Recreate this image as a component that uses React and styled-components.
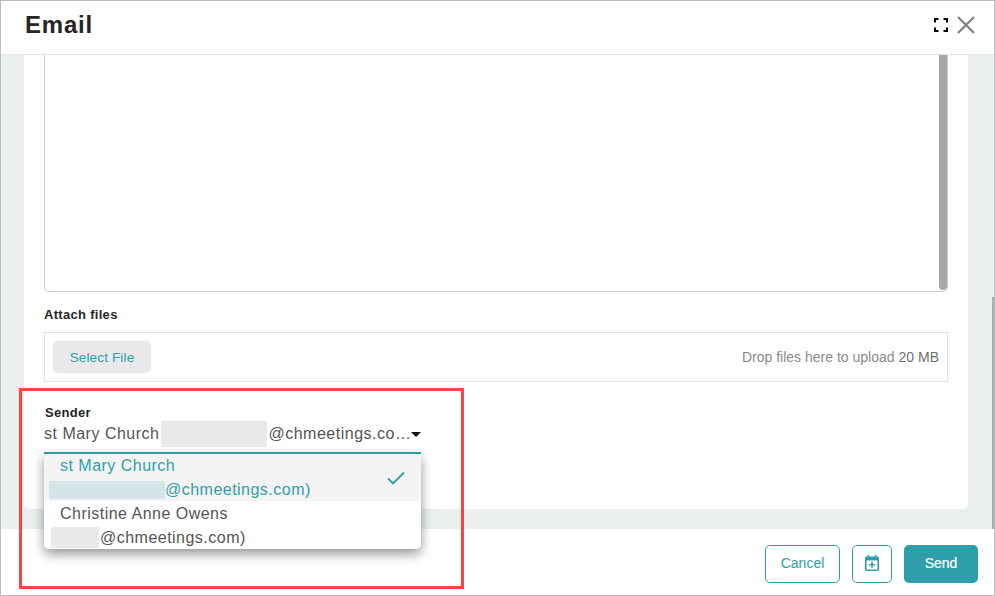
import React from 'react'
import styled, { createGlobalStyle } from 'styled-components'

const GlobalStyle = createGlobalStyle`
  html, body { margin: 0; padding: 0; background: #fff; }
  * { box-sizing: border-box; }
  body { font-family: "Liberation Sans", Arial, sans-serif; }
`

const Window = styled.div`
  position: relative;
  width: 995px;
  height: 596px;
  display: flex;
  flex-direction: column;
  border: 1px solid #bdbdbd;
  background: #fff;
  overflow: hidden;
`

const Header = styled.header`
  height: 54px;
  flex: none;
  display: flex;
  align-items: center;
  justify-content: space-between;
  padding: 0 19px 6px 24px;
  border-bottom: 1px solid #e6e6e6;
`

const Title = styled.h1`
  margin: 0;
  font-size: 24px;
  font-weight: 700;
  letter-spacing: 0.8px;
  color: #262626;
`

const HeaderIcons = styled.div`
  display: flex;
  align-items: center;
  gap: 9px;
`

const Body = styled.main`
  flex: none;
  height: 474px;
  background: #ebefef;
  padding: 0 26px 20px 23px;
  position: relative;
`

const Card = styled.section`
  height: 100%;
  background: #fff;
  border-radius: 0 0 5px 5px;
  padding: 0 20px;
`

const MessageBox = styled.div`
  position: relative;
  height: 237px;
  border: 1px solid #cccccc;
  border-top: none;
  border-radius: 0 0 5px 5px;
`

const InnerScroll = styled.div`
  position: absolute;
  top: 0;
  right: 0;
  width: 8px;
  height: 235px;
  background: #a9a9a9;
  border-radius: 0 0 4px 4px;
`

const PageScroll = styled.div`
  position: absolute;
  right: 0;
  bottom: 0;
  width: 2px;
  height: 232px;
  background: #ababab;
`

const FieldLabel = styled.div`
  font-size: 13px;
  font-weight: 700;
  color: #262626;
  letter-spacing: 0.3px;
  line-height: 14px;
`

const AttachLabel = styled(FieldLabel)`
  margin-top: 16px;
`

const SenderLabel = styled(FieldLabel)`
  padding-left: 1px;
`

const DropZone = styled.div`
  margin-top: 10px;
  height: 50px;
  border: 1px solid #e0e0e0;
  display: flex;
  align-items: center;
  justify-content: space-between;
  padding: 0 8px;
`

const SelectFile = styled.button`
  width: 98px;
  height: 32px;
  border: none;
  border-radius: 5px;
  background: #e9e9e9;
  color: #2e9fa9;
  font: 400 13.5px "Liberation Sans", Arial, sans-serif;
  letter-spacing: 0.15px;
`

const DropHint = styled.span`
  font-size: 14px;
  color: #8a8a8a;
`

const HintSize = styled.span`
  color: #707070;
  margin-left: 4px;
`

const SenderField = styled.div`
  position: relative;
  width: 377px;
  margin-top: 24px;
`

const SelectRow = styled.div`
  position: relative;
  z-index: 3;
  height: 34px;
  padding-bottom: 4px;
  display: flex;
  align-items: center;
  border-bottom: 2px solid #2e9aa3;
  font-size: 16px;
  letter-spacing: 0.5px;
  color: #555;
  white-space: nowrap;
`

const Redact = styled.span`
  display: inline-block;
  flex: none;
  width: ${p => p.$w}px;
  height: ${p => p.$h}px;
  margin: 0 ${p => p.$right || 0}px 0 ${p => p.$left || 0}px;
  background: ${p => p.$tint || '#e9e9e9'};
`

const Caret = styled.span`
  width: 0;
  height: 0;
  border-left: 5px solid transparent;
  border-right: 5px solid transparent;
  border-top: 5px solid #111;
`

const Menu = styled.ul`
  position: absolute;
  left: 0;
  top: 47px;
  width: 100%;
  margin: 0;
  padding: 0;
  list-style: none;
  background: #fff;
  border-radius: 0 0 5px 5px;
  box-shadow: 0 5px 12px rgba(0, 0, 0, 0.42);
  z-index: 2;
`

const Option = styled.li`
  position: relative;
  height: 48px;
  padding-left: 16px;
  font-size: 16px;
  letter-spacing: 0.48px;
  color: ${p => (p.$selected ? '#2e9fa9' : '#555')};
  background: ${p => (p.$selected ? '#f4f4f4' : '#fff')};
  border-radius: ${p => (p.$selected ? '0' : '0 0 5px 5px')};
`

const OptionName = styled.div`
  height: 25px;
  line-height: 25px;
  white-space: nowrap;
`

const OptionEmail = styled.div`
  display: flex;
  align-items: center;
  height: 23px;
  margin-left: ${p => p.$shift}px;
  white-space: nowrap;
`

const Check = styled.svg`
  position: absolute;
  right: 16px;
  top: 18px;
`

const Footer = styled.footer`
  flex: 1;
  display: flex;
  justify-content: flex-end;
  align-items: flex-start;
  gap: 12px;
  padding: 16px 16px 0 0;
`

const OutlineButton = styled.button`
  width: ${p => p.$w}px;
  height: 38px;
  display: flex;
  align-items: center;
  justify-content: center;
  border: 1px solid #2e9fa9;
  border-radius: 5px;
  background: #fff;
  color: #2e9fa9;
  font: 400 14px "Liberation Sans", Arial, sans-serif;
  padding: 0 0 2px;
`

const SendButton = styled.button`
  width: 74px;
  height: 38px;
  border: none;
  border-radius: 5px;
  background: #2e9fa9;
  color: #fff;
  font: 400 14px "Liberation Sans", Arial, sans-serif;
  -webkit-text-stroke: 0.2px #fff;
  padding: 0 0 2px;
`

const Annotation = styled.div`
  position: absolute;
  left: 18px;
  top: 387px;
  width: 445px;
  height: 201px;
  border: 3px solid #fb4444;
  pointer-events: none;
  z-index: 4;
`

const ExpandIcon = () => (
  <svg width="14" height="14" viewBox="0 0 14 14" fill="none" stroke="#000" strokeWidth="2">
    <path d="M1 4.500V1h3.500M9.500 1H13v3.500M13 9.500V13H9.500M4.500 13H1V9.500" />
  </svg>
)

const CloseIcon = () => (
  <svg width="18" height="18" viewBox="0 0 18 18" fill="none" stroke="#808080" strokeWidth="2.2">
    <path d="M1 1l16 16M17 1L1 17" />
  </svg>
)

const ScheduleIcon = () => (
  <svg width="14" height="16" viewBox="0 0 14 16" fill="none" stroke="#2e9fa9" strokeWidth="1.600">
    <path d="M3.500 0v3M10.500 0v3" />
    <rect x="0.800" y="2.300" width="12.400" height="12.900" rx="0.600" />
    <path d="M0.800 4.200h12.400" strokeWidth="2.400" />
    <path d="M7 6.800v6M4 9.800h6" />
  </svg>
)

const App = () => {
  return (
    <Window>
      <GlobalStyle />
      <Header>
        <Title>Email</Title>
        <HeaderIcons>
          <ExpandIcon />
          <CloseIcon />
        </HeaderIcons>
      </Header>
      <Body>
        <Card>
          <MessageBox>
            <InnerScroll />
          </MessageBox>
          <AttachLabel>Attach files</AttachLabel>
          <DropZone>
            <SelectFile>Select File</SelectFile>
            <DropHint>
              Drop files here to upload<HintSize>20 MB</HintSize>
            </DropHint>
          </DropZone>
          <SenderField>
            <SenderLabel>Sender</SenderLabel>
            <SelectRow>
              st Mary Church
              <Redact $w={106} $h={26} $left={2} $right={1} />
              @chmeetings.co…
              <Caret />
            </SelectRow>
            <Menu>
              <Option $selected>
                <OptionName>st Mary Church</OptionName>
                <OptionEmail $shift={-11}>
                  <Redact $w={116} $h={18} $tint="#d3e5e8" />
                  @chmeetings.com)
                </OptionEmail>
                <Check width="18" height="14" viewBox="0 0 18 14" fill="none" stroke="#2e9fa9" strokeWidth="1.800">
                  <path d="M1 7.500l5 5L17 1.500" />
                </Check>
              </Option>
              <Option>
                <OptionName>Christine Anne Owens</OptionName>
                <OptionEmail $shift={-9}>
                  <Redact $w={48} $h={21} $right={1} />
                  @chmeetings.com)
                </OptionEmail>
              </Option>
            </Menu>
          </SenderField>
        </Card>
        <PageScroll />
      </Body>
      <Footer>
        <OutlineButton $w={75}>Cancel</OutlineButton>
        <OutlineButton $w={40}>
          <ScheduleIcon />
        </OutlineButton>
        <SendButton>Send</SendButton>
      </Footer>
      <Annotation />
    </Window>
  )
}

export default App
